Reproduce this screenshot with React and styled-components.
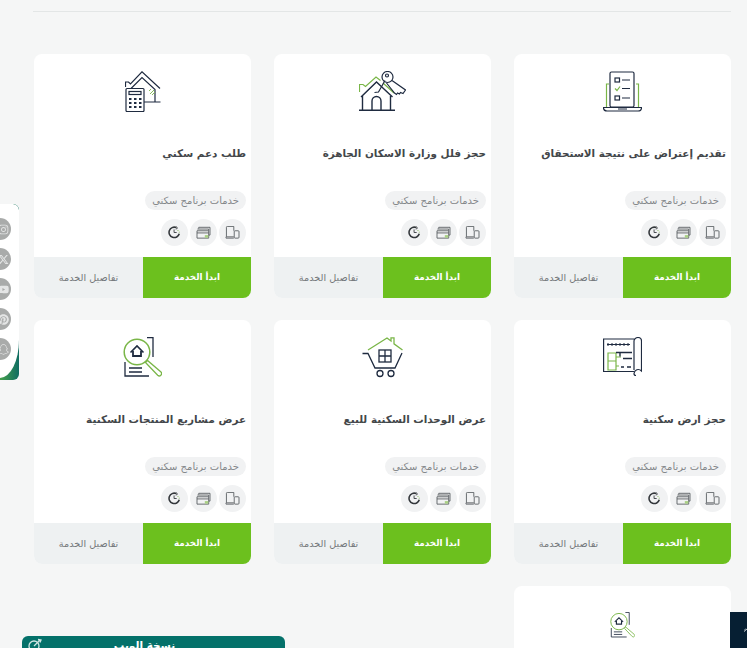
import React from "react";
import styled, { createGlobalStyle } from "styled-components";
import { FaInstagram, FaXTwitter, FaYoutube, FaPinterest, FaSnapchat } from "react-icons/fa6";

const navy = "#1f2b40";
const leaf = "#7ab648";
const font = `"DejaVu Sans", "Noto Sans", sans-serif`;

const Global = createGlobalStyle`
  html, body { margin: 0; padding: 0; height: 648px; overflow: hidden; background: #f5f6f6; }
  * { box-sizing: border-box; }
  body { font-family: ${font}; }
`;

const Page = styled.main`
  position: relative;
  width: 747px;
  height: 648px;
  overflow: hidden;
  padding: 11px 16px 0 33px;
`;
const Rule = styled.hr`
  margin: 0 0 42px;
  border: 0;
  height: 1px;
  background: #e3e6e6;
`;
const Grid = styled.section`
  display: grid;
  direction: rtl;
  grid-template-columns: repeat(3, 217px);
  gap: 22px 23px;
  margin-left: 1px;
`;
const Card = styled.article`
  height: 244px;
  background: #fff;
  border-radius: 8px;
  overflow: hidden;
  display: flex;
  flex-direction: column;
`;
const IconWrap = styled.div`
  height: 42px;
  margin-top: ${p => (p.$small ? 18 : 16)}px;
  display: flex;
  justify-content: center;
  align-items: center;
`;
const Title = styled.h3`
  margin: 31px 5px 0;
  height: 20px;
  font: 700 10.4px/20px ${font};
  color: #43474a;
  white-space: nowrap;
`;
const Tag = styled.span`
  align-self: flex-start;
  margin: 28px 5px 0;
  height: 19px;
  padding: 0 7px;
  border-radius: 10px;
  background: #f1f2f3;
  color: #84878a;
  font: 400 10px/19px ${font};
  white-space: nowrap;
`;
const Channels = styled.div`
  display: flex;
  gap: 2px;
  margin: 9px 5px 0;
`;
const Channel = styled.span`
  width: 27px;
  height: 27px;
  border-radius: 50%;
  background: #f1f2f3;
  display: flex;
  align-items: center;
  justify-content: center;
`;
const Footer = styled.footer`
  margin-top: auto;
  height: 41px;
  display: grid;
  grid-template-columns: 108px 1fr;
`;
const Start = styled.a`
  background: #6cc01e;
  color: #fff;
  font: 700 8.8px/41px ${font};
  text-align: center;
`;
const Details = styled.a`
  background: #eef1f2;
  color: #74787b;
  font: 400 9.7px/41px ${font};
  text-align: center;
`;
const Social = styled.aside`
  position: absolute;
  left: 0;
  top: 204px;
  width: 19px;
  height: 176px;
  border-radius: 0 6px 6px 0;
  overflow: hidden;
  background: linear-gradient(to right, #46a04c, #0f6d62);
`;
const SocialInner = styled.div`
  height: 174px;
  width: 19px;
  background: #fff;
  border-radius: 0 6px 19px 0 / 0 6px 38px 0;
  display: flex;
  flex-direction: column;
  gap: 8px;
  padding-top: 14px;
`;
const SocialDot = styled.span`
  width: 22px;
  height: 22px;
  margin-left: -11px;
  padding-left: 6px;
  border-radius: 50%;
  background: #a9abaa;
  color: #e4e5e5;
  font-size: 11px;
  display: flex;
  align-items: center;
  justify-content: center;
  flex: none;
`;
const WebBar = styled.div`
  position: absolute;
  left: 22px;
  top: 636px;
  width: 263px;
  height: 40px;
  padding-right: 18px;
  border-radius: 6px 6px 0 0;
  background: #04716a;
  color: #fff;
  font: 700 10.5px/18px ${font};
  text-align: center;
  direction: rtl;
`;
const WebIcon = styled.svg`
  position: absolute;
  left: 6px;
  top: 2px;
`;
const Corner = styled.div`
  position: absolute;
  left: 730px;
  top: 612px;
  width: 17px;
  height: 36px;
  background: #061f33;
  display: flex;
  align-items: center;
  padding-left: 14px;
`;

const Checklist = () => (
  <svg width="39" height="41" viewBox="0 0 39 41" fill="none" stroke={navy} strokeWidth="1.2">
    <path d="M6 13H3.5V36M33 13h2.5V36" stroke={leaf} />
    <rect x="7" y="1" width="24" height="35" rx="1.5" />
    <rect x="12" y="7" width="4.5" height="4" />
    <path d="M19 9h8M19 17.5h8M19 27h8" />
    <path d="M12 17.5l2 2 3-4" stroke={leaf} />
    <rect x="12" y="25" width="4.5" height="4" />
    <path d="M.5 36.5h38c0 2-1.500 3.500-3.500 3.500H4C2 40 .5 38.500 .5 36.500z" />
    <path d="M15 38h9" />
  </svg>
);
const HouseCalc = () => (
  <svg width="36" height="41" viewBox="0 0 36 41" fill="none" stroke={navy} strokeWidth="1.2">
    <path d="M.5 16V11h3l2 2L17 .8 35 17.500" />
    <path d="M3 20.500L17 6.500 30 18.500V31M19 31h16.500" />
    <path d="M25 23l4-4M27 24l3-3M24 20l2-2" stroke={leaf} strokeWidth=".9" />
    <rect x="1" y="17.500" width="18" height="23" rx="1" fill="#fff" />
    <rect x="4" y="20.500" width="12" height="3" fill="none" />
    <path d="M4 28h2.500M9 28h2.500M14 28h2.500M4 32h2.500M9 32h2.500M14 32h2.500M4 36h2.500M9 36h2.500M14 36h2.500" strokeWidth="2" />
  </svg>
);
const HouseKey = () => (
  <svg width="47" height="41" viewBox="0 0 47 41" fill="none" stroke={navy} strokeWidth="1.2">
    <path d="M.5 21v-7.500h3.500l2.500 2L17 6l4.500 3.500M24 12l11 10" stroke={leaf} />
    <path d="M2 26L17.500 11 33.500 26" strokeWidth="1.400" />
    <path d="M3.500 25V39M31.500 25V39M0 39.300h36" strokeWidth="1.400" />
    <path d="M13 39V30a4.500 4.500 0 0 1 9 0v9" strokeWidth="1.400" />
    <path d="M15.500 21.500l4-.5L26 9.500" />
    <circle cx="28.500" cy="6" r="5.500" />
    <circle cx="28" cy="4.500" r="1.500" />
    <path d="M33 9.500L46.500 19 44 22.500l-2.500-1-1 1.500-2-1-1 1.500-2-1.500L27.500 12" />
  </svg>
);
const Plan = () => (
  <svg width="39" height="40" viewBox="0 0 39 40" fill="none" stroke={navy} strokeWidth="1.2">
    <path d="M31 2H.6v32.500H31" />
    <path d="M31 33V4c0-2 2-3.500 4-3.500s3.500 1.500 3.500 3.500v30c-3-3-7-1-7.500 2.500 0 1 1 2 2 2" />
    <path d="M4 7.500h23" />
    <path d="M5 6v3M9 6v3M13 6v3M17 6v3M21 6v3M25 6v3" strokeWidth="1" />
    <path d="M5 16h8v8H5zM5 24h8v9H5zM13 20h5M13 29h3" stroke={leaf} />
    <path d="M13 15.500h16M17 15.500v4M20 21.500h9M18 30h3M24 30h4" strokeWidth="1.400" />
  </svg>
);
const Cart = () => (
  <svg width="41" height="41" viewBox="0 0 41 41" fill="none" stroke={navy} strokeWidth="1.3">
    <path d="M6 13L25 1l4 3V.8h3v6L40.500 13" stroke={leaf} />
    <path d="M.5 16.500H6L13 31h20l7-15" />
    <rect x="17" y="13" width="12" height="12" />
    <path d="M23 13v12M17 19h12" />
    <circle cx="18" cy="36.500" r="3" />
    <circle cx="29" cy="36.500" r="3" />
  </svg>
);
const Search = ({ size = 39 }) => (
  <svg width={size} height={size * 40 / 39} viewBox="0 0 39 40" fill="none" stroke={navy} strokeWidth="1.3">
    <path d="M24 .7h6V20M30 31v2M2 25V39H26" />
    <path d="M6 31h13M6 35h13" />
    <circle cx="14" cy="15" r="12.800" stroke={leaf} strokeWidth="1.500" />
    <path d="M22.500 25.500l2-2 13.200 11.300a2.200 2.200 0 0 1-3 3.500z" stroke={leaf} strokeWidth="1.300" fill="#fff" />
    <path d="M7.500 15.500L14 9l6.500 6.500" strokeWidth="1.600" />
    <path d="M10 14v5h8v-5" strokeWidth="1.800" />
  </svg>
);

const Devices = () => (
  <svg width="15" height="13" viewBox="0 0 17 15" fill="none" stroke="#55595d" strokeWidth="1">
    <path d="M10 12.500H1.500V1.500a1 1 0 0 1 1-1H10v5" />
    <rect x="10.500" y="5.500" width="5.500" height="8.500" rx="1" />
    <path d="M1 12.500v1.500h9" />
  </svg>
);
const Cards = () => (
  <svg width="15" height="13" viewBox="0 0 17 15" fill="none" stroke="#55595d" strokeWidth="1">
    <path d="M3 3V1.500h13v9h-1.500M1.500 3.500h13v2M1 5.500V14h13.500V5.500H1" />
    <rect x="10" y="10.500" width="4" height="3" fill="#a9d084" stroke="none" />
    <path d="M1 8h13.500" />
  </svg>
);
const Timer = () => (
  <svg width="13" height="13" viewBox="0 0 15 15" fill="none" stroke="#33373b" strokeWidth="1.800">
    <path d="M9.500 1.800A6 6 0 1 0 13 9" />
    <path d="M9 .5l2 1.800-2 1.500" strokeWidth="1" />
    <path d="M7 4v3.500h3" strokeWidth="1" />
    <path d="M11.500 4.500v1M13 6.500v1" stroke={leaf} strokeWidth="1.200" />
  </svg>
);

const services = [
  { title: "تقديم إعتراض على نتيجة الاستحقاق", icon: <Checklist /> },
  { title: "حجز فلل وزارة الاسكان الجاهزة", icon: <HouseKey /> },
  { title: "طلب دعم سكني", icon: <HouseCalc /> },
  { title: "حجز ارض سكنية", icon: <Plan /> },
  { title: "عرض الوحدات السكنية للبيع", icon: <Cart /> },
  { title: "عرض مشاريع المنتجات السكنية", icon: <Search /> },
  { title: "عرض مشاريع الأراضي السكنية", icon: <Search size={25} />, small: true },
];

const socials = [FaInstagram, FaXTwitter, FaYoutube, FaPinterest, FaSnapchat];

export default function App() {
  return (
    <Page>
      <Global />
      <Rule />
      <Grid>
        {services.map(s => (
          <Card key={s.title}>
            <IconWrap $small={s.small}>{s.icon}</IconWrap>
            <Title>{s.title}</Title>
            <Tag>خدمات برنامج سكني</Tag>
            <Channels>
              <Channel><Devices /></Channel>
              <Channel><Cards /></Channel>
              <Channel><Timer /></Channel>
            </Channels>
            <Footer>
              <Start>ابدأ الخدمة</Start>
              <Details>تفاصيل الخدمة</Details>
            </Footer>
          </Card>
        ))}
      </Grid>
      <Social>
        <SocialInner>
          {socials.map((Icon, i) => (
            <SocialDot key={i}><Icon /></SocialDot>
          ))}
        </SocialInner>
      </Social>
      <WebBar>
        <WebIcon width="14" height="14" viewBox="0 0 14 14" fill="none" stroke="#cfe5e2" strokeWidth="1.300">
          <circle cx="6" cy="8" r="5" />
          <path d="M6 8l6-6M10 1.500l3 .5-1 2.500" />
        </WebIcon>
        نسخة الويب
      </WebBar>
      <Corner>
        <svg width="5" height="6" viewBox="0 0 5 6" fill="none" stroke="#fff" strokeWidth="1.200">
          <path d="M0 4l3-3 2 2M0 6l3-3" />
        </svg>
      </Corner>
    </Page>
  );
}
